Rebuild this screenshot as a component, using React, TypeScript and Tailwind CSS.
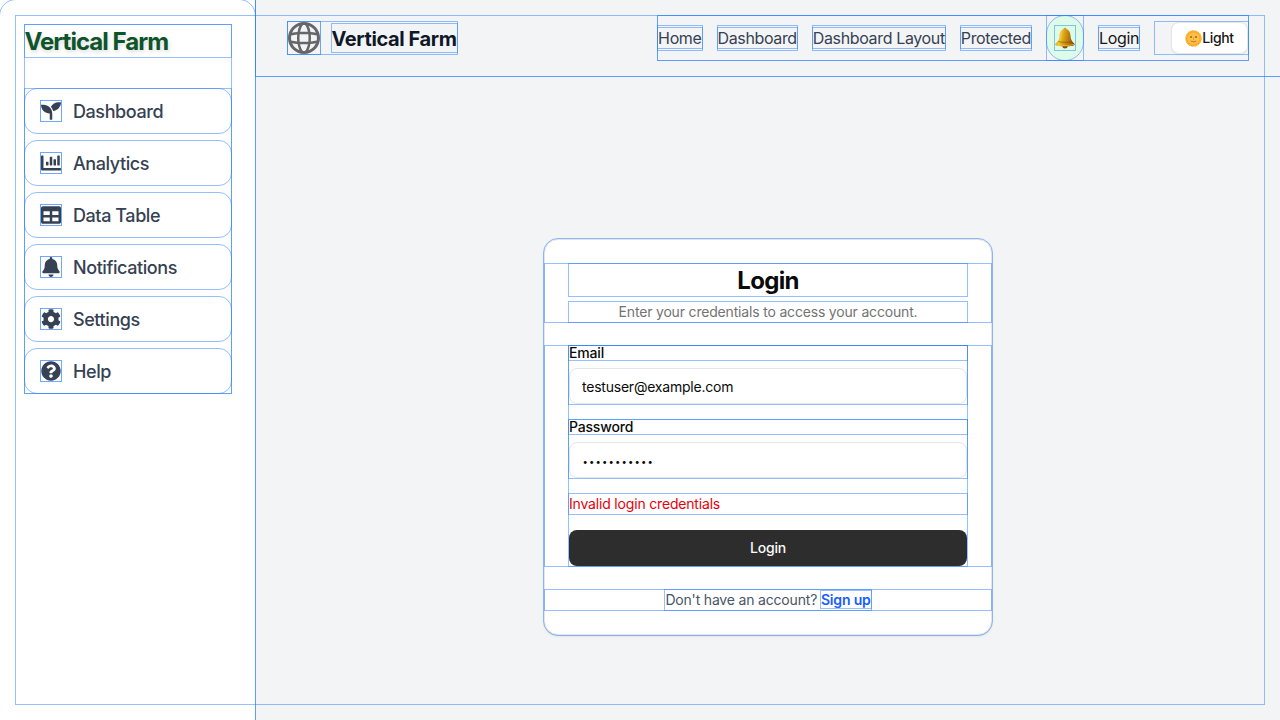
import type { ComponentType } from "react";
import { FaBell, FaChartBar, FaCog, FaQuestionCircle, FaSeedling, FaTable } from "react-icons/fa";

const debug = "outline outline-[#2b7fff80]";

const menu: { label: string; Icon: ComponentType<{ className?: string }> }[] = [
  { label: "Dashboard", Icon: FaSeedling },
  { label: "Analytics", Icon: FaChartBar },
  { label: "Data Table", Icon: FaTable },
  { label: "Notifications", Icon: FaBell },
  { label: "Settings", Icon: FaCog },
  { label: "Help", Icon: FaQuestionCircle },
];

function Globe() {
  return (
    <svg viewBox="0 0 16 16" className="size-8 outline outline-[#2b7fffb0]">
      <path
        fillRule="evenodd"
        clipRule="evenodd"
        fill="#666"
        d="M10.27 14.1a6.5 6.5 0 0 0 3.67-3.45q-1.24.21-2.7.34-.31 1.83-.97 3.1M8 16A8 8 0 1 0 8 0a8 8 0 0 0 0 16m.48-1.52a7 7 0 0 1-.96 0H7.5a4 4 0 0 1-.84-1.32q-.38-.89-.63-2.08a40 40 0 0 0 3.92 0q-.25 1.2-.63 2.08a4 4 0 0 1-.84 1.31zm2.94-4.76q1.66-.15 2.95-.43a7 7 0 0 0 0-2.58q-1.3-.27-2.95-.43a18 18 0 0 1 0 3.44m-1.27-3.54a17 17 0 0 1 0 3.64 39 39 0 0 1-4.3 0 17 17 0 0 1 0-3.64 39 39 0 0 1 4.3 0m1.1-1.17q1.45.13 2.69.34a6.5 6.5 0 0 0-3.67-3.44q.65 1.26.98 3.1M8.48 1.5l.01.02q.41.37.84 1.31.38.89.63 2.08a40 40 0 0 0-3.92 0q.25-1.2.63-2.08a4 4 0 0 1 .85-1.32 7 7 0 0 1 .96 0m-2.75.4a6.5 6.5 0 0 0-3.67 3.44 29 29 0 0 1 2.7-.34q.31-1.83.97-3.1M4.58 6.28q-1.66.16-2.95.43a7 7 0 0 0 0 2.58q1.3.27 2.95.43a18 18 0 0 1 0-3.44m.17 4.71q-1.45-.12-2.69-.34a6.5 6.5 0 0 0 3.67 3.44q-.65-1.27-.98-3.1"
      />
    </svg>
  );
}

function GoldBell() {
  return (
    <svg viewBox="0 0 22 22" className="size-[22px] shrink-0">
      <defs>
        <linearGradient id="gold" x1="0" x2="1" y1="0" y2="0.15">
          <stop offset="0" stopColor="#b87408" />
          <stop offset="0.3" stopColor="#f5cf3c" />
          <stop offset="0.45" stopColor="#e0a91c" />
          <stop offset="0.75" stopColor="#b97a0c" />
          <stop offset="1" stopColor="#8a5206" />
        </linearGradient>
      </defs>
      <ellipse cx="11" cy="19.4" rx="2.6" ry="2.1" fill="#83500b" />
      <circle cx="11" cy="2.3" r="1.6" fill="#d99c1a" />
      <path d="M11 2C7 2 5.8 5.2 5.5 8.5c-.3 4-1.2 5.6-4 8.2-.7 1 .1 1.9 1.5 2.1 5 .8 11 .8 16 0 1.4-.2 2.2-1.1 1.5-2.1-2.8-2.6-3.7-4.2-4-8.2C16.2 5.2 15 2 11 2z" fill="url(#gold)" />
      <path d="M4.3 14.6c4.3 1 9.1 1 13.4 0" stroke="#8a5808" strokeWidth="0.7" fill="none" />
      <path d="M1.5 17.3c6 1.6 13 1.6 19 0" stroke="#f0bd35" strokeWidth="0.8" fill="none" />
    </svg>
  );
}

function SunFace() {
  return (
    <svg viewBox="0 0 16 16" className="size-[17px] shrink-0">
      <circle cx="8" cy="8" r="7.5" fill="#f9a825" />
      <circle cx="8" cy="8" r="7" fill="none" stroke="#fbb83a" strokeWidth="1.4" strokeDasharray="1.5 1.3" />
      <circle cx="8" cy="8" r="5.7" fill="#fdc04a" />
      <ellipse cx="5.7" cy="6.5" rx="0.8" ry="0.9" fill="#8a4b10" />
      <ellipse cx="10.3" cy="6.5" rx="0.8" ry="0.9" fill="#8a4b10" />
      <path d="M8 6.5v2.5" stroke="#f09a25" strokeWidth="0.9" />
      <path d="M5.4 10.4q2.6 1.6 5.2 0" stroke="#b96518" strokeWidth="0.8" fill="none" />
    </svg>
  );
}

function Sidebar() {
  return (
    <aside className={`w-[255px] shrink-0 bg-white ${debug}`}>
      <div className={`h-[760px] rounded-2xl pt-[25px] pr-6 pl-[25px] ${debug}`}>
        <div className={debug}>
          <h2 className={`mb-8 h-8 pt-px -indent-[0.6px] text-2xl font-bold tracking-[-0.95px] text-[#0d542b] [text-shadow:1px_2px_4px_rgba(0,0,0,0.15)] ${debug}`}>
            Vertical Farm
          </h2>
          <nav className={`flex flex-col gap-2 ${debug}`}>
            {menu.map(({ label, Icon }) => (
              <a key={label} className={`flex h-11 items-center gap-3 rounded-xl px-4 text-lg font-medium tracking-[-0.42px] text-[#364153] ${debug}`}>
                <Icon className="size-5 outline outline-[#2b7fffb0]" />
                <span className="pt-0.5">{label}</span>
              </a>
            ))}
          </nav>
        </div>
      </div>
    </aside>
  );
}

function Header() {
  return (
    <div className={`ml-px ${debug}`}>
      <header className={`flex h-[76px] items-center justify-between px-8 ${debug}`}>
        <div className={`flex items-center gap-3 ${debug}`}>
          <Globe />
          <span className={`h-7 pt-px -indent-[0.5px] text-xl font-bold tracking-[-0.4px] text-[#101828] ${debug}`}>Vertical Farm</span>
        </div>
        <nav className={debug}>
          <div className={`flex items-center gap-4 text-base tracking-[-0.36px] text-[#364153] ${debug}`}>
            {["Home", "Dashboard", "Dashboard Layout", "Protected"].map((label) => (
              <div key={label} className={debug}>
                <a className={debug}>{label}</a>
              </div>
            ))}
            <div className={`-ml-[0.3px] ${debug}`}>
              <div className={`flex h-11 w-[36.4px] items-center justify-center rounded-full bg-[#dcfce7] ${debug}`}>
                <span className={`flex h-6 w-5 items-center justify-center ${debug}`}>
                  <GoldBell />
                </span>
              </div>
            </div>
            <div className={`text-[#171717] ${debug}`}>
              <a className={debug}>Login</a>
            </div>
            <div className={`pl-4 ${debug}`}>
              <button className="flex h-8 w-[77px] items-center justify-center rounded-lg border border-[#e5e5e5] bg-white text-sm font-medium text-[#171717] shadow-xs">
                <SunFace />
                Light
              </button>
            </div>
          </div>
        </nav>
      </header>
    </div>
  );
}

function Field({ label, type, value }: { label: string; type: "email" | "password"; value: string }) {
  return (
    <div className={`flex flex-col gap-2 ${debug}`}>
      <label className={`text-sm leading-none font-medium ${debug}`}>{label}</label>
      <input
        type={type}
        defaultValue={value}
        className={`h-9 w-full rounded-lg border border-[#e5e5e5] bg-white px-3 text-[#0a0a0a] ${
          type === "password" ? "indent-[0.5px] pt-0.5 text-[9.5px] tracking-[1.15px]" : "text-sm tracking-[-0.22px]"
        }`}
      />
    </div>
  );
}

function LoginCard() {
  return (
    <section className={`flex w-[448px] flex-col gap-6 self-start rounded-[14px] border border-[#e5e5e5] bg-white py-6 tracking-[-0.18px] text-[#0a0a0a] shadow-sm ${debug}`}>
      <div className={`flex flex-col gap-1.5 px-6 text-center ${debug}`}>
        <h1 className={`h-8 pt-px text-2xl font-bold tracking-[-0.7px] ${debug}`}>Login</h1>
        <p className={`text-sm text-[#737373] ${debug}`}>Enter your credentials to access your account.</p>
      </div>
      <div className={`px-6 ${debug}`}>
        <form className={`flex flex-col gap-4 ${debug}`}>
          <Field label="Email" type="email" value="testuser@example.com" />
          <Field label="Password" type="password" value="secretpass1" />
          <p className={`text-sm text-[#e7000b] ${debug}`}>Invalid login credentials</p>
          <button type="button" className="h-9 rounded-lg bg-[#2d2d2d] text-sm font-medium text-[#fafafa]">
            Login
          </button>
        </form>
      </div>
      <div className={`flex justify-center ${debug}`}>
        <p className={`text-sm text-[#4a5565] ${debug}`}>
          Don't have an account? <a className={`font-semibold text-[#155dfc] ${debug}`}>Sign up</a>
        </p>
      </div>
    </section>
  );
}

export default function App() {
  return (
    <div className="relative flex h-[720px] w-[1280px] overflow-hidden bg-[#f3f4f6] font-['Inter',sans-serif]">
      <Sidebar />
      <div className="min-w-0 flex-1">
        <Header />
        <main className="ml-px flex justify-center pt-[163px]">
          <LoginCard />
        </main>
      </div>
      <div className={`pointer-events-none absolute inset-4 ${debug}`} />
    </div>
  );
}
